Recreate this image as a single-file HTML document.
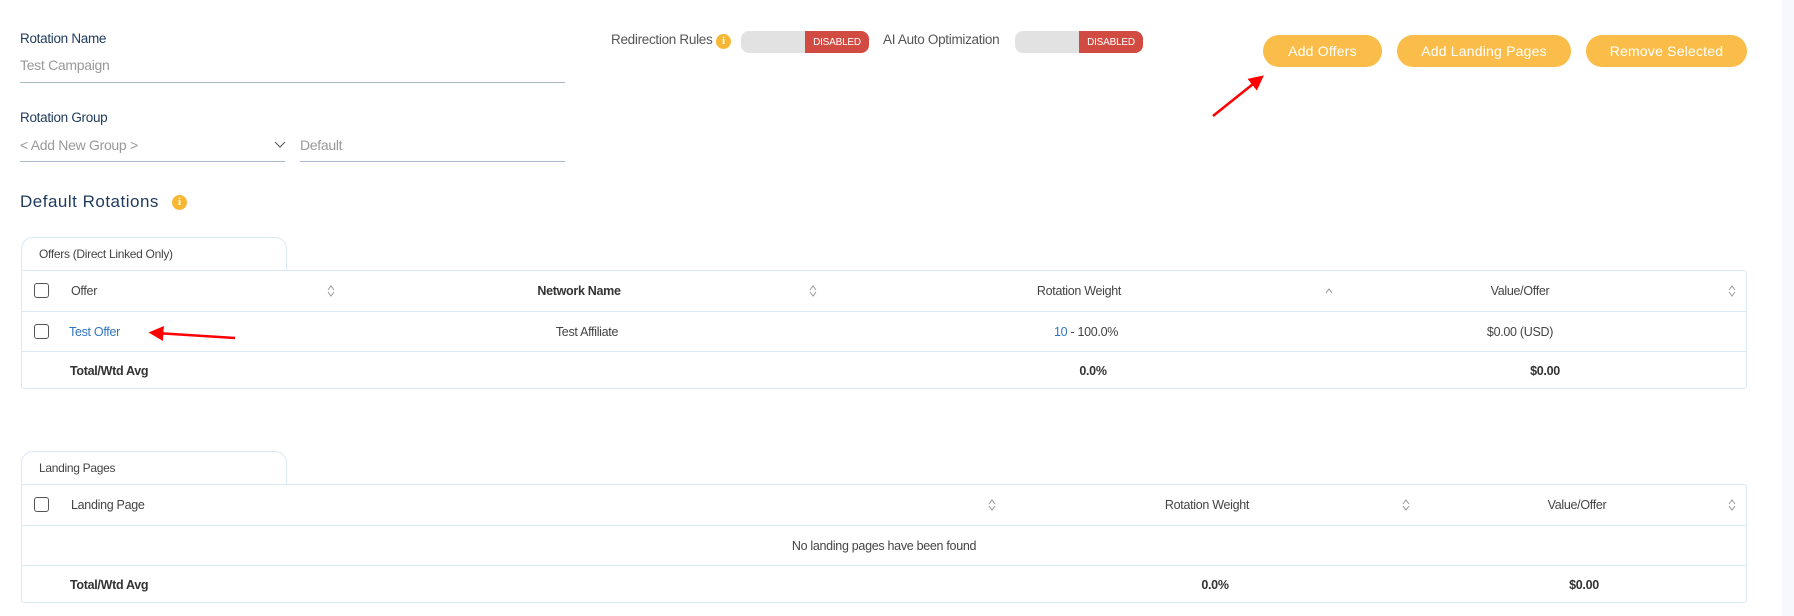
<!DOCTYPE html>
<html><head><meta charset="utf-8"><style>
*{box-sizing:border-box;margin:0;padding:0}
body{width:1794px;height:616px;background:#fff;position:relative;overflow:hidden;font-family:"Liberation Sans",sans-serif;color:#444}
.a{position:absolute;white-space:nowrap}
.lbl{font-size:13.5px;color:#1f3a5c;letter-spacing:-0.3px}
.ph{font-size:14px;color:#999;letter-spacing:-0.3px}
.ul{position:absolute;height:1px;background:#a9b8cc}
.tog{position:absolute;width:128px;height:22px;border-radius:8px;background:#e2e2e2;overflow:hidden}
.tog span{position:absolute;right:0;top:0;width:64px;height:22px;background:#d24b42;color:#fff;font-size:10px;display:flex;align-items:center;justify-content:center;letter-spacing:-0.2px}
.btn{position:absolute;top:35px;height:32px;border-radius:16px;background:#fbbd49;color:#fff;font-size:14px;line-height:32px;text-align:center;letter-spacing:0.2px}
.info{position:absolute;width:15px;height:15px;border-radius:50%;background:#f7b733;color:#fff;font-size:11px;font-weight:bold;line-height:15px;text-align:center;font-family:"Liberation Serif",serif}
.tab{position:absolute;left:21px;width:266px;height:34px;border:1px solid #dbe8f6;border-bottom:none;border-radius:12px 12px 0 0;font-size:12px;color:#444;padding:9px 0 0 17px;letter-spacing:-0.3px}
.tbl{position:absolute;left:21px;width:1726px;border:1px solid #dbe8f6;border-radius:3px}
.row{position:absolute;left:0;right:0;border-bottom:1px solid #dbe8f6}
.cb{position:absolute;left:12px;width:15px;height:15px;border:1px solid #555;border-radius:3px}
.t{position:absolute;font-size:12.5px;white-space:nowrap;letter-spacing:-0.3px;color:#444}
.c{transform:translateX(-50%)}
.b{font-weight:bold;color:#333}
.s{position:absolute;width:8px;height:14px}
</style></head><body>
<div style="position:absolute;left:1782px;top:0;width:12px;height:616px;background:#f6f8fd"></div>

<div class="a lbl" style="left:20px;top:31px">Rotation Name</div>
<div class="a ph" style="left:20px;top:57px">Test Campaign</div>
<div class="ul" style="left:20px;top:82px;width:545px"></div>
<div class="a lbl" style="left:20px;top:110px">Rotation Group</div>
<div class="a ph" style="left:20px;top:137px">&lt; Add New Group &gt;</div>
<svg class="a" style="left:274px;top:141px" width="12" height="8"><path d="M1 1l5 5 5-5" fill="none" stroke="#666" stroke-width="1.2"/></svg>
<div class="ul" style="left:20px;top:161px;width:265px"></div>
<div class="a ph" style="left:300px;top:137px">Default</div>
<div class="ul" style="left:300px;top:161px;width:265px"></div>
<div class="a" style="left:20px;top:192px;font-size:17px;color:#1f3a5c;letter-spacing:0.5px">Default Rotations</div>
<div class="info" style="left:172px;top:195px">i</div>

<div class="a" style="left:611px;top:32px;font-size:13.5px;color:#555;letter-spacing:-0.3px">Redirection Rules</div>
<div class="info" style="left:716px;top:34px">i</div>
<div class="tog" style="left:741px;top:31px"><span>DISABLED</span></div>
<div class="a" style="left:883px;top:32px;font-size:13.5px;color:#555;letter-spacing:-0.3px">AI Auto Optimization</div>
<div class="tog" style="left:1015px;top:31px"><span>DISABLED</span></div>

<div class="btn" style="left:1263px;width:119px">Add Offers</div>
<div class="btn" style="left:1397px;width:174px">Add Landing Pages</div>
<div class="btn" style="left:1586px;width:161px">Remove Selected</div>

<svg class="a" style="left:0;top:0" width="1794" height="616">
<defs><marker id="m" markerWidth="6" markerHeight="6" refX="3" refY="3" orient="auto"><path d="M0 0L6 3L0 6z" fill="#f00"/></marker></defs>
<line x1="1213" y1="116" x2="1258" y2="80" stroke="#f00" stroke-width="2.5" marker-end="url(#m)"/>
<line x1="235" y1="338" x2="156" y2="333" stroke="#f00" stroke-width="2.5" marker-end="url(#m)"/>
</svg>

<div class="tab" style="top:237px">Offers (Direct Linked Only)</div>
<div class="tbl" style="top:270px;height:119px">
 <div class="row" style="top:0;height:41px">
  <div class="cb" style="top:12px"></div>
  <div class="t" style="left:49px;top:13px">Offer</div>
  <svg class="s" style="left:305px;top:13px"><path d="M1 6l3-4 3 4M1 8l3 4 3-4" fill="none" stroke="#999"/></svg>
  <div class="t c b" style="left:557px;top:13px">Network Name</div>
  <svg class="s" style="left:787px;top:13px"><path d="M1 6l3-4 3 4M1 8l3 4 3-4" fill="none" stroke="#999"/></svg>
  <div class="t c" style="left:1057px;top:13px">Rotation Weight</div>
  <svg class="s" style="left:1303px;top:13px"><path d="M1 9l3-4 3 4" fill="none" stroke="#999"/></svg>
  <div class="t c" style="left:1498px;top:13px">Value/Offer</div>
  <svg class="s" style="left:1706px;top:13px"><path d="M1 6l3-4 3 4M1 8l3 4 3-4" fill="none" stroke="#999"/></svg>
 </div>
 <div class="row" style="top:41px;height:40px">
  <div class="cb" style="top:12px"></div>
  <div class="t" style="left:47px;top:13px;color:#2f77c4">Test Offer</div>
  <div class="t c" style="left:565px;top:13px">Test Affiliate</div>
  <div class="t c" style="left:1064px;top:13px"><span style="color:#2f77c4">10</span> - 100.0%</div>
  <div class="t c" style="left:1498px;top:13px">$0.00 (USD)</div>
 </div>
 <div class="t b" style="left:48px;top:93px">Total/Wtd Avg</div>
 <div class="t c b" style="left:1071px;top:93px">0.0%</div>
 <div class="t c b" style="left:1523px;top:93px">$0.00</div>
</div>

<div class="tab" style="top:451px">Landing Pages</div>
<div class="tbl" style="top:484px;height:119px">
 <div class="row" style="top:0;height:41px">
  <div class="cb" style="top:12px"></div>
  <div class="t" style="left:49px;top:13px">Landing Page</div>
  <svg class="s" style="left:966px;top:13px"><path d="M1 6l3-4 3 4M1 8l3 4 3-4" fill="none" stroke="#999"/></svg>
  <div class="t c" style="left:1185px;top:13px">Rotation Weight</div>
  <svg class="s" style="left:1380px;top:13px"><path d="M1 6l3-4 3 4M1 8l3 4 3-4" fill="none" stroke="#999"/></svg>
  <div class="t c" style="left:1555px;top:13px">Value/Offer</div>
  <svg class="s" style="left:1706px;top:13px"><path d="M1 6l3-4 3 4M1 8l3 4 3-4" fill="none" stroke="#999"/></svg>
 </div>
 <div class="row" style="top:41px;height:40px">
  <div class="t c" style="left:862px;top:13px">No landing pages have been found</div>
 </div>
 <div class="t b" style="left:48px;top:93px">Total/Wtd Avg</div>
 <div class="t c b" style="left:1193px;top:93px">0.0%</div>
 <div class="t c b" style="left:1562px;top:93px">$0.00</div>
</div>
</body></html>
